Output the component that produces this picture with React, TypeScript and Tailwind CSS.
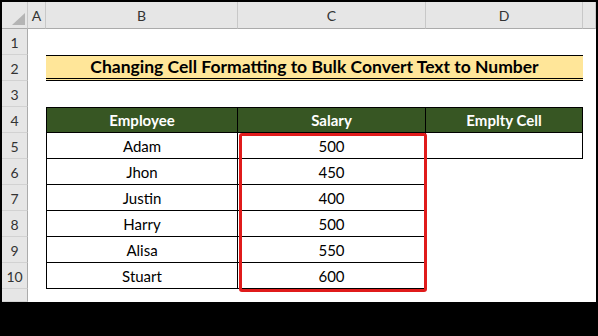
import React from "react";

const cols = ["A", "B", "C", "D", ""];
const employees = [
  { name: "Adam", salary: "500" },
  { name: "Jhon", salary: "450" },
  { name: "Justin", salary: "400" },
  { name: "Harry", salary: "500" },
  { name: "Alisa", salary: "550" },
  { name: "Stuart", salary: "600" },
];

const rowStart = [
  "row-start-2",
  "row-start-3",
  "row-start-4",
  "row-start-5",
  "row-start-6",
  "row-start-7",
  "row-start-8",
  "row-start-9",
  "row-start-10",
  "row-start-11",
  "row-start-12",
];

export default function App() {
  return (
    <div className="w-[598px] h-[336px] bg-black pt-[2px] pl-[2px] font-['Lato',sans-serif]">
      <div className="grid w-[594px] h-[300px] bg-white grid-cols-[26px_18px_192px_188px_157px_13px] grid-rows-[27px_repeat(10,26px)_13px]">
        {/* Corner */}
        <div className="col-start-1 row-start-1 bg-[#e6e6e6] border-r border-b border-r-[#c8c8c8] border-b-[#ababab] flex items-end justify-end pr-[2px] pb-[3px]">
          <svg width="13" height="12" viewBox="0 0 13 12">
            <polygon points="13,0 13,12 0,12" fill="#b4b4b4" />
          </svg>
        </div>

        {/* Column letters */}
        {cols.map((c, i) => (
          <div
            key={i}
            className="row-start-1 bg-[#e6e6e6] border-r border-b border-r-[#c8c8c8] border-b-[#ababab] flex items-center justify-center text-[14px] text-[#333]"
          >
            {c}
          </div>
        ))}

        {/* Row numbers */}
        {Array.from({ length: 11 }).map((_, i) => (
          <div
            key={i}
            className={`col-start-1 ${rowStart[i]} bg-[#e6e6e6] border-r border-b border-r-[#ababab] border-b-[#d2d2d2] flex items-center justify-center pt-px text-[14px] text-[#333]`}
          >
            {i < 10 ? i + 1 : ""}
          </div>
        ))}

        {/* Title row 2 */}
        <div className="col-start-3 col-span-3 row-start-3 bg-[#ffe699] border-t border-black border-b-[3px] border-double flex items-center justify-center pt-px text-[17.5px] font-bold text-black">
          Changing Cell Formatting to Bulk Convert Text to Number
        </div>

        {/* Table header row 4 */}
        <div className="col-start-3 row-start-5 bg-[#375623] border border-black flex items-center justify-center text-[15px] font-bold text-white">
          Employee
        </div>
        <div className="col-start-4 row-start-5 bg-[#375623] border-t border-r border-b border-black flex items-center justify-center text-[15px] font-bold text-white">
          Salary
        </div>
        <div className="col-start-5 row-start-5 bg-[#375623] border-t border-r border-b border-black flex items-center justify-center text-[15px] font-bold text-white">
          Emplty Cell
        </div>

        {/* Table body */}
        {employees.map((e, i) => (
          <React.Fragment key={e.name}>
            <div
              className={`col-start-3 ${rowStart[i + 4]} border-l border-r border-b border-black flex items-center justify-center pt-[2px] text-[15px] text-black`}
            >
              {e.name}
            </div>
            <div
              className={`col-start-4 ${rowStart[i + 4]} border-r border-b border-black flex items-center justify-center pt-[2px] text-[15px] text-black`}
            >
              {e.salary}
            </div>
          </React.Fragment>
        ))}
        <div className="col-start-5 row-start-6 border-r border-b border-black" />

        {/* Highlight around salaries */}
        <div className="col-start-4 row-start-6 row-span-6 ml-px -mr-px -mb-[3px] border-[3px] border-[#e01b1b] rounded-[3px] pointer-events-none z-10" />
      </div>
    </div>
  );
}
